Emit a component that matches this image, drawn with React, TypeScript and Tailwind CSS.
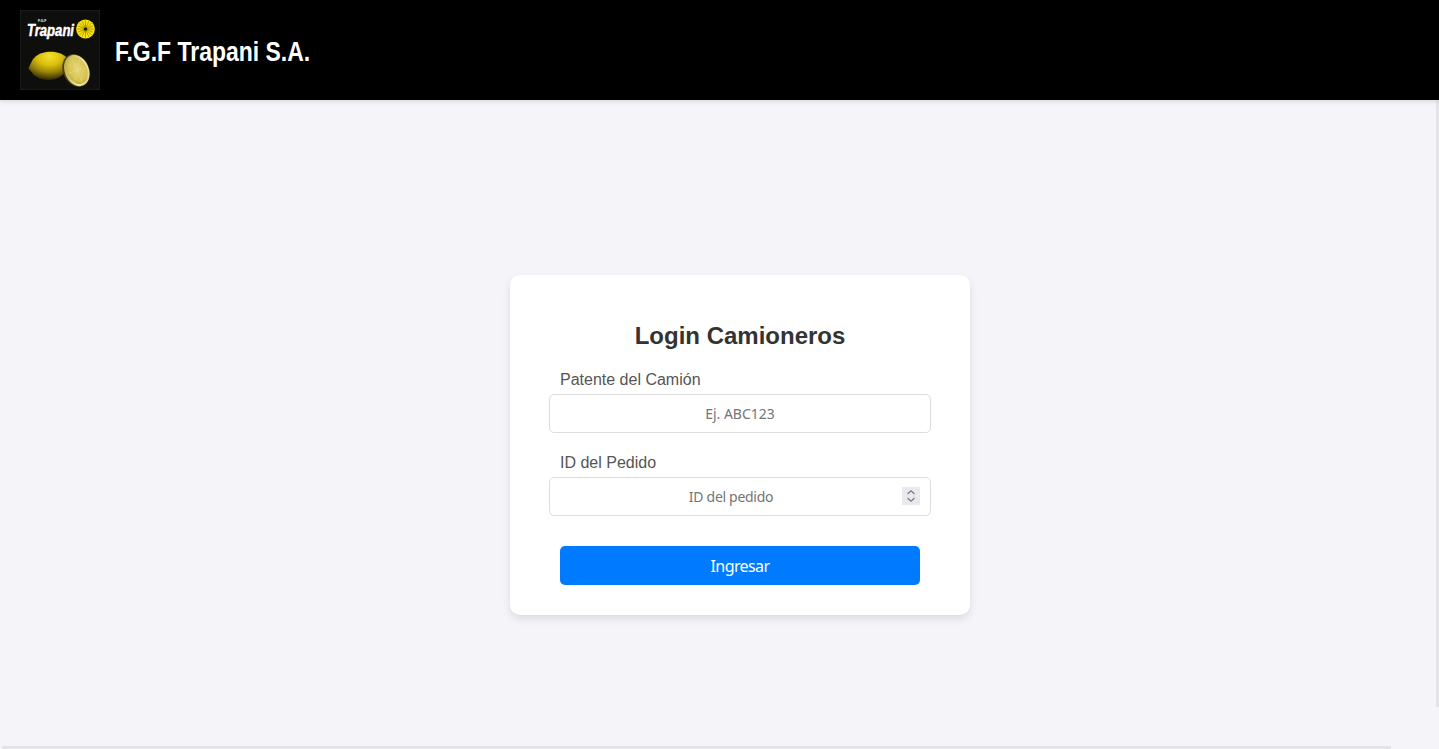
import React from "react";

function Logo() {
  return (
    <svg width="80" height="80" viewBox="0 0 80 80" className="shrink-0 block">
      <defs>
        <radialGradient id="lem" cx="0.55" cy="0.16" r="0.92">
          <stop offset="0" stopColor="#f2e02c" />
          <stop offset="0.34" stopColor="#dcc00d" />
          <stop offset="0.62" stopColor="#97820a" />
          <stop offset="0.88" stopColor="#3a3104" />
          <stop offset="1" stopColor="#191602" />
        </radialGradient>
        <radialGradient id="cut" cx="0.55" cy="0.45" r="0.62">
          <stop offset="0" stopColor="#e6d672" />
          <stop offset="0.7" stopColor="#d8c455" />
          <stop offset="1" stopColor="#b8a434" />
        </radialGradient>
        <linearGradient id="rim" x1="0" y1="0" x2="1" y2="1">
          <stop offset="0" stopColor="#a89a3c" />
          <stop offset="0.6" stopColor="#efe6a2" />
          <stop offset="1" stopColor="#d8cc7c" />
        </linearGradient>
      </defs>
      <rect width="80" height="80" fill="#0e0e0d" />
      <rect x="0.5" y="0.5" width="79" height="79" fill="none" stroke="#1a1a18" />
      <path d="M8.5 58 C10.5 55 11.5 50 15.5 46.5 C21 41.5 32 40.5 39 43 C42 44 45 45.5 46.5 47.5 C46 50 47 54 46 59 C44 66 36 70.5 28 70 C20 70 14 66 11.5 62 C10.5 60.5 9 60 8.5 58 Z" fill="url(#lem)" />
      <ellipse cx="56" cy="60.5" rx="13" ry="17" transform="rotate(-24 56 60.5)" fill="#4a4105" />
      <ellipse cx="56.8" cy="60.5" rx="12" ry="16.2" transform="rotate(-24 56.8 60.5)" fill="url(#rim)" />
      <ellipse cx="57" cy="60.5" rx="10" ry="14" transform="rotate(-24 57 60.5)" fill="url(#cut)" />
      <g stroke="#efe6a6" strokeWidth="0.45" opacity="0.65">
        <line x1="57" y1="60.5" x2="51.5" y2="48" />
        <line x1="57" y1="60.5" x2="62.5" y2="73" />
        <line x1="57" y1="60.5" x2="47.5" y2="63.5" />
        <line x1="57" y1="60.5" x2="66.5" y2="57.5" />
        <line x1="57" y1="60.5" x2="60" y2="48" />
        <line x1="57" y1="60.5" x2="54" y2="73" />
      </g>
      <circle cx="65.5" cy="19" r="9.4" fill="#fbe30c" />
      <g stroke="#3a3300" strokeWidth="0.4">
        <line x1="65.5" y1="10.5" x2="65.5" y2="27.5" />
        <line x1="57" y1="19" x2="74" y2="19" />
        <line x1="59.5" y1="13" x2="71.5" y2="25" />
        <line x1="71.5" y1="13" x2="59.5" y2="25" />
        <line x1="62.2" y1="11.2" x2="68.8" y2="26.8" />
        <line x1="68.8" y1="11.2" x2="62.2" y2="26.8" />
        <line x1="57.7" y1="15.7" x2="73.3" y2="22.3" />
        <line x1="73.3" y1="15.7" x2="57.7" y2="22.3" />
      </g>
      <circle cx="65.5" cy="19" r="1.6" fill="#1a1700" />
      <text x="7" y="25.5" fill="#fff" stroke="#fff" strokeWidth="0.5" fontFamily="'Liberation Sans', sans-serif" fontWeight="700" fontStyle="italic" fontSize="17" textLength="47" lengthAdjust="spacingAndGlyphs">Trapani</text>
      <text x="18" y="11.5" fill="#fff" fontFamily="'Liberation Sans', sans-serif" fontWeight="700" fontSize="3.4">F.G.F</text>
    </svg>
  );
}

function Field({ label, placeholder, spinner }: { label: string; placeholder: string; spinner?: boolean }) {
  return (
    <div className="flex flex-col">
      <label className="pl-[11px] text-[16px] leading-[18px] text-[#555555] font-['Liberation_Sans',sans-serif] mb-[5px]">{label}</label>
      <div className="relative flex items-center h-[39px] w-[382px] rounded-[5px] border border-[#dddddd] bg-white">
        <span className={`flex-1 text-center text-[14px] text-[#757575] font-['Noto_Sans',sans-serif] ${spinner ? "pr-[18px] tracking-[-0.3px]" : ""}`}>{placeholder}</span>
        {spinner && (
          <span className="absolute right-[10px] top-[9px] flex h-[18px] w-[18px] items-center justify-center bg-[#e9e9ed]">
            <svg width="10" height="14" viewBox="0 0 10 14" fill="none" stroke="#77777d" strokeWidth="1.2">
              <path d="M1.5 5 L5 1.8 L8.5 5" />
              <path d="M1.5 9 L5 12.2 L8.5 9" />
            </svg>
          </span>
        )}
      </div>
    </div>
  );
}

export default function App() {
  return (
    <div className="relative h-[749px] w-[1439px] overflow-hidden bg-[#f4f4f9]">
      <header className="relative z-10 flex h-[100px] w-full items-center bg-black px-[20px] shadow-[0_2px_4px_rgba(0,0,0,0.1)]">
        <Logo />
        <h1 className="ml-[15px] pt-[4px] origin-left scale-x-[0.82] text-[28px] leading-[32px] font-bold text-white whitespace-nowrap font-['Liberation_Sans',sans-serif]">F.G.F Trapani S.A.</h1>
      </header>
      <main className="flex h-[690px] w-[1480px] items-center justify-center">
        <div className="flex h-[340px] w-[460px] flex-col items-center rounded-[10px] bg-white pt-[46px] shadow-[0_4px_8px_rgba(0,0,0,0.1)]">
          <h2 className="mb-[20px] text-[24px] leading-[30px] font-bold text-[#333333] font-['Liberation_Sans',sans-serif]">Login Camioneros</h2>
          <div className="flex flex-col gap-[21px]">
            <Field label="Patente del Camión" placeholder="Ej. ABC123" />
            <Field label="ID del Pedido" placeholder="ID del pedido" spinner />
          </div>
          <button className="mt-[30px] h-[39px] w-[360px] rounded-[5px] bg-[#007bff] text-[16px] tracking-[-0.6px] text-white font-['Noto_Sans',sans-serif]">Ingresar</button>
        </div>
      </main>
      <div className="absolute right-0 top-[100px] h-[607px] w-[3px] bg-[#e3e3e8]" />
      <div className="absolute bottom-0 left-[2px] h-[3px] w-[1389px] bg-[#e3e3e8]" />
    </div>
  );
}
